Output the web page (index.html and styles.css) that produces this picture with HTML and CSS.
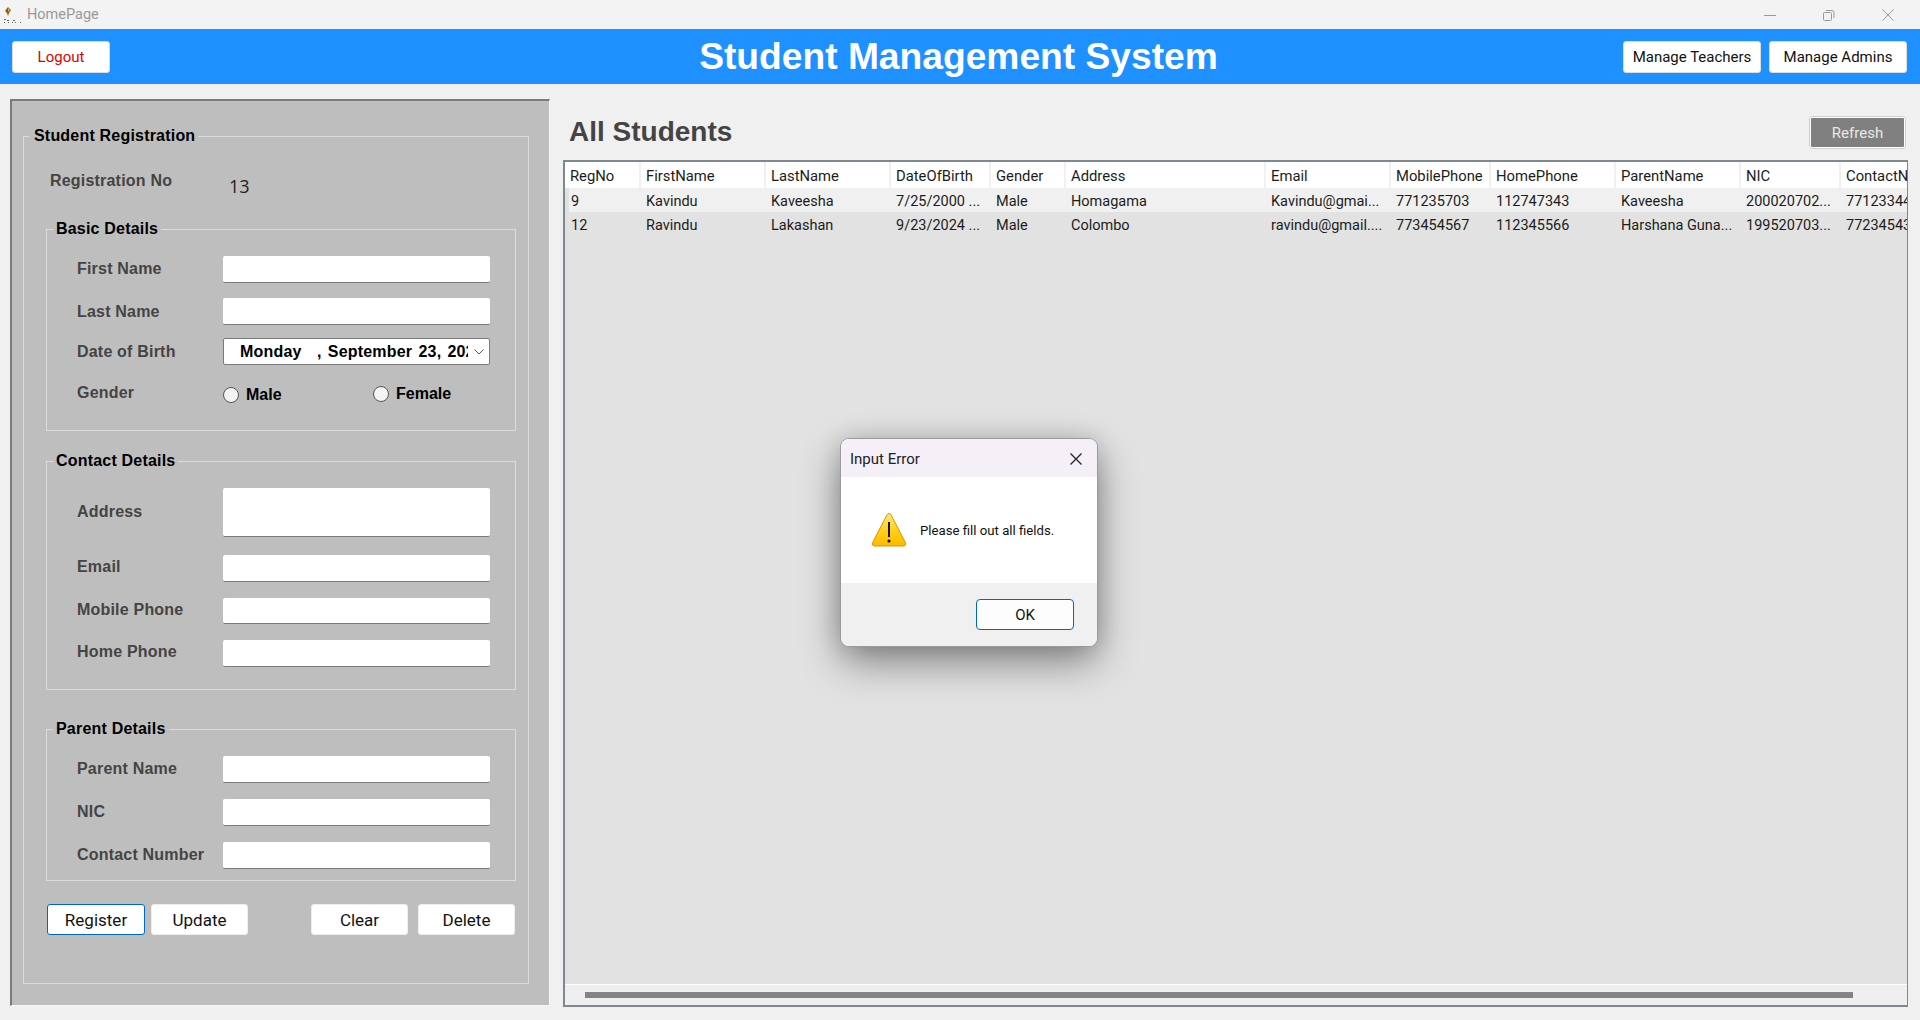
FILE: index.html
```html
<!DOCTYPE html>
<html>
  <head>
    <meta charset="utf-8">
    <title>HomePage</title>
    <link rel="stylesheet" href="styles.css">
  </head>
  <body>
    <div class="titlebar">
      <svg class="app-icon" width="18" height="18" viewBox="0 0 18 18">
        <path d="M5 1l3 3-2 3-1 3-1-3-2-2z" fill="#8a5a1c"/>
        <path d="M5 2l2 2-2 2z" fill="#e0b040"/>
        <path d="M1 13h2v1H1zM4 14h2v1H4zM1 16h1v1H1zM5 16h1v1H5zM10 14h2v1h-2zM9 16h1v1H9zM12 16h1v1h-1zM17 16h1v1h-1z" fill="#666"/>
      </svg>
      <span class="app-name">HomePage</span>
      <div class="win-controls">
        <svg width="12" height="12" viewBox="0 0 12 12"><path d="M0 6.500h12" stroke="#999" fill="none"/></svg>
        <svg width="12" height="12" viewBox="0 0 12 12"><path d="M1.500 3.500h6a1 1 0 0 1 1 1v6a1 1 0 0 1-1 1h-6a1 1 0 0 1-1-1v-6a1 1 0 0 1 1-1zM3 1.500h6a2 2 0 0 1 2 2V9" stroke="#999" fill="none"/></svg>
        <svg width="12" height="12" viewBox="0 0 12 12"><path d="M.5.5l11 11M11.500.5l-11 11" stroke="#999" fill="none"/></svg>
      </div>
    </div>

    <div class="header">
      <div class="header-left"><button class="btn logout">Logout</button></div>
      <div class="app-title">Student Management System</div>
      <div class="header-right">
        <button class="btn manage">Manage Teachers</button>
        <button class="btn manage">Manage Admins</button>
      </div>
    </div>

    <div class="main">
      <div class="left-panel">
        <fieldset class="outer-box">
          <legend class="outer-legend">Student Registration</legend>
          <div class="reg-row">
            <span class="label">Registration No</span>
            <span class="reg-value">13</span>
          </div>

          <fieldset class="group basic">
            <legend>Basic Details</legend>
            <div class="row first-name"><span class="label">First Name</span><input class="txt" type="text"></div>
            <div class="row"><span class="label">Last Name</span><input class="txt" type="text"></div>
            <div class="row">
              <span class="label">Date of Birth</span>
              <div class="date-box">
                <span class="date-text"><span class="date-day">Monday</span>, September 23, 2024</span>
                <svg width="10" height="6" viewBox="0 0 10 6"><path d="M.5.5L5 5 9.500.5" stroke="#555" fill="none"/></svg>
              </div>
            </div>
            <div class="row gender-row">
              <span class="label">Gender</span>
              <div class="radios">
                <label class="radio male"><span class="dot"></span>Male</label>
                <label class="radio female"><span class="dot"></span>Female</label>
              </div>
            </div>
          </fieldset>

          <fieldset class="group contact">
            <legend>Contact Details</legend>
            <div class="row address-row"><span class="label">Address</span><textarea class="txt"></textarea></div>
            <div class="row"><span class="label">Email</span><input class="txt" type="text"></div>
            <div class="row"><span class="label">Mobile Phone</span><input class="txt" type="text"></div>
            <div class="row"><span class="label">Home Phone</span><input class="txt" type="text"></div>
          </fieldset>

          <fieldset class="group parent">
            <legend>Parent Details</legend>
            <div class="row"><span class="label">Parent Name</span><input class="txt" type="text"></div>
            <div class="row"><span class="label">NIC</span><input class="txt" type="text"></div>
            <div class="row"><span class="label">Contact Number</span><input class="txt" type="text"></div>
          </fieldset>

          <div class="form-buttons">
            <button class="btn form-btn focused">Register</button>
            <button class="btn form-btn">Update</button>
            <span class="spacer"></span>
            <button class="btn form-btn clear">Clear</button>
            <button class="btn form-btn">Delete</button>
          </div>
        </fieldset>
      </div>

      <div class="right-panel">
        <div class="list-head">
          <h1>All Students</h1>
          <button class="refresh">Refresh</button>
        </div>
        <div class="grid-box">
          <div class="grid-scroll">
            <table>
              <colgroup>
                <col class="w75"><col class="w125"><col class="w125"><col class="w100"><col class="w75"><col class="w200">
                <col class="w125"><col class="w100"><col class="w125"><col class="w125"><col class="w100"><col class="w125">
              </colgroup>
              <thead>
                <tr>
                  <th>RegNo</th><th>FirstName</th><th>LastName</th><th>DateOfBirth</th><th>Gender</th><th>Address</th>
                  <th>Email</th><th>MobilePhone</th><th>HomePhone</th><th>ParentName</th><th>NIC</th><th>ContactNumber</th>
                </tr>
              </thead>
              <tbody>
                <tr class="odd">
                  <td>9</td><td>Kavindu</td><td>Kaveesha</td><td>7/25/2000 ...</td><td>Male</td><td>Homagama</td>
                  <td>Kavindu@gmai...</td><td>771235703</td><td>112747343</td><td>Kaveesha</td><td>200020702...</td><td>771233445</td>
                </tr>
                <tr>
                  <td>12</td><td>Ravindu</td><td>Lakashan</td><td>9/23/2024 ...</td><td>Male</td><td>Colombo</td>
                  <td>ravindu@gmail....</td><td>773454567</td><td>112345566</td><td>Harshana Guna...</td><td>199520703...</td><td>772345432</td>
                </tr>
              </tbody>
            </table>
          </div>
          <div class="hscroll"><div class="hscroll-thumb"></div></div>
        </div>
      </div>
    </div>

    <div class="dialog">
      <div class="dialog-title">
        <span>Input Error</span>
        <svg width="12" height="12" viewBox="0 0 12 12"><path d="M.5.5l11 11M11.500.5l-11 11" stroke="#222" stroke-width="1.300" fill="none"/></svg>
      </div>
      <div class="dialog-body">
        <svg width="36" height="36" viewBox="0 0 36 36">
          <defs>
            <linearGradient id="warnfill" x1="0" y1="0" x2="0" y2="1">
              <stop offset="0" stop-color="#ffe680"/>
              <stop offset="0.5" stop-color="#ffd21a"/>
              <stop offset="1" stop-color="#fdb900"/>
            </linearGradient>
          </defs>
          <path d="M18 1.500c.8 0 1.500.5 2 1.300l14.500 28c.8 1.600-.1 3.200-1.800 3.200H3.300c-1.700 0-2.600-1.600-1.800-3.200L16 2.800c.5-.8 1.200-1.300 2-1.300z" fill="url(#warnfill)" stroke="#d89300"/>
          <path d="M17 10h2v15h-2z" fill="#111"/>
          <circle cx="18" cy="29" r="1.600" fill="#111"/>
        </svg>
        <span>Please fill out all fields.</span>
      </div>
      <div class="dialog-foot"><button class="ok-btn">OK</button></div>
    </div>
  </body>
</html>
```

FILE: styles.css
```css
*{
  box-sizing: border-box;
}
html,body{
  margin: 0;
  height: 1020px;
  overflow: hidden;
}
body{
  display: flex;
  flex-direction: column;
  background: #f0f0f0;
  font-family: "Liberation Sans", Arial, sans-serif;
}

/* title bar */
.titlebar{
  height: 29px;
  flex: none;
  display: flex;
  align-items: center;
  background: #f3f3f3;
  padding-left: 3px;
}
.app-icon{
  margin-top: 1px;
}
.app-name{
  margin-left: 6px;
  font: 14.5px "Roboto", sans-serif;
  color: #999;
}
.win-controls{
  margin-left: auto;
  display: flex;
  gap: 47px;
  padding-right: 26px;
}

/* blue header */
.header{
  height: 55px;
  flex: none;
  display: grid;
  grid-template-columns: 1fr auto 1fr;
  align-items: center;
  background: #1e90ff;
  padding: 0 13px 0 12px;
}
.app-title{
  font-size: 37.2px;
  font-weight: bold;
  color: #fff;
  margin-left: -2px;
}
.header-right{
  display: flex;
  justify-content: flex-end;
  gap: 8px;
}
.btn{
  background: #fff;
  border: 1px solid #dcdcdc;
  border-radius: 3px;
  font-family: "Roboto", sans-serif;
  color: #111;
  padding: 0;
}
.logout{
  width: 98px;
  height: 32px;
  color: #e00000;
  font-size: 15px;
}
.manage{
  width: 138px;
  height: 32px;
  font-size: 15px;
}

/* main area */
.main{
  flex: 1;
  display: flex;
  padding: 15px 12px 13px 10px;
  gap: 13px;
}
.left-panel{
  width: 540px;
  flex: none;
  margin-bottom: 1px;
  background: #bebebe;
  border-top: 2px solid #7a7a7a;
  border-left: 2px solid #7a7a7a;
  border-right: 1px solid #f8f8f8;
  border-bottom: 1px solid #f8f8f8;
  padding: 26px 0 0 11px;
}
fieldset{
  margin: 0;
  padding: 0;
  min-width: 0;
  border: 1px solid #dcdcdc;
}
legend{
  font-size: 16px;
  font-weight: bold;
  line-height: 18px;
  letter-spacing: .2px;
  color: #000;
  padding: 0 3px;
  margin-left: 6px;
}
.outer-box{
  width: 506px;
  height: 857px;
}
.outer-legend{
  margin-left: 5px;
  padding: 0 3px 0 5px;
}
.label{
  font-size: 16px;
  font-weight: bold;
  letter-spacing: .2px;
  color: #444;
  white-space: nowrap;
}
.reg-row{
  display: flex;
  height: 75px;
  padding: 27px 0 0 26px;
}
.reg-row .label{
  width: 179px;
}
.reg-value{
  font: 18px "Open Sans", sans-serif;
  color: #222;
  margin-top: 2px;
}

.group{
  width: 470px;
  margin-left: 22px;
  padding-left: 30px;
}
.group legend{
  margin-left: -24px;
}
.contact{
  margin-top: 21px;
  height: 238px;
  padding-top: 18px;
}
.parent{
  margin-top: 30px;
  height: 161px;
  padding-top: 18px;
}
.basic{
  height: 211px;
  padding-top: 18px;
}
.row{
  display: grid;
  grid-template-columns: 146px 267px;
  align-items: center;
  height: 27px;
  margin-bottom: 13px;
}
.first-name{
  margin-bottom: 15px;
}
.contact .row{
  height: 26.5px;
  margin-bottom: 16px;
}
.contact .address-row{
  height: 49px;
  margin-bottom: 18px;
}
.parent .row{
  margin-bottom: 16px;
}
.contact .label,
.parent .label,
.first-name .label{
  margin-top: -2px;
}
.txt{
  display: block;
  width: 267px;
  height: 100%;
  margin: 0;
  background: #fff;
  border: 0;
  border-bottom: 1px solid #7a7a7a;
  border-radius: 2px;
  resize: none;
  outline: none;
}
.date-box{
  height: 27px;
  display: flex;
  align-items: center;
  background: #fff;
  border: 1px solid #7a7a7a;
  border-radius: 2px;
  padding-left: 16px;
}
.date-text{
  width: 228px;
  overflow: hidden;
  white-space: nowrap;
  font-size: 16px;
  font-weight: bold;
  letter-spacing: .2px;
  word-spacing: 1.5px;
  color: #000;
}
.date-day{
  display: inline-block;
  width: 77px;
}
.date-box svg{
  margin-left: 6px;
}
.gender-row .label{
  margin-top: 2px;
}
.radios{
  display: flex;
  align-self: start;
}
.radio{
  display: flex;
  align-items: center;
  font-size: 16px;
  font-weight: bold;
  color: #000;
  gap: 7px;
}
.male{
  width: 150px;
  margin-top: 8px;
}
.female{
  margin-top: 6px;
}
.dot{
  width: 16px;
  height: 16px;
  border: 1px solid #555;
  border-radius: 50%;
  background: #f4f4f4;
}
.form-buttons{
  display: flex;
  margin: 23px 0 0 23px;
}
.form-btn{
  width: 97px;
  height: 31px;
  font-size: 17px;
  border-color: #eee;
  margin-right: 6px;
}
.form-btn.clear{
  margin-right: 10px;
}
.focused{
  width: 98px;
  border: 1px solid #0067c0;
}
.spacer{
  width: 57px;
}

/* right side */
.right-panel{
  flex: 1;
  min-width: 0;
  display: flex;
  flex-direction: column;
}
.list-head{
  display: flex;
  justify-content: space-between;
  align-items: center;
  margin-top: 17px;
  height: 33px;
  margin-bottom: 11px;
  padding-left: 6px;
}
h1{
  margin: -2px 0 0;
  font-size: 28px;
  font-weight: bold;
  color: #444;
}
.refresh{
  width: 97px;
  height: 33px;
  margin-right: 2px;
  background: #808080;
  border: 2px solid #fff;
  outline: 1px solid #d0d0d0;
  outline-offset: -1px;
  border-radius: 3px;
  color: #e8e8e8;
  font: 15px "Roboto", sans-serif;
}
.grid-box{
  flex: 1;
  min-height: 0;
  display: flex;
  flex-direction: column;
  background: #e2e2e2;
  border: 1px solid #7f8790;
  border-top-width: 2px;
  border-left-width: 2px;
  border-bottom-width: 2px;
}
.grid-scroll{
  flex: 1;
  overflow: hidden;
}
table{
  table-layout: fixed;
  width: 1400px;
  border-collapse: collapse;
  font: 14.5px "Roboto", sans-serif;
  color: #1c1c1c;
}
.w75{ width: 75px; }
.w100{ width: 100px; }
.w125{ width: 125px; }
.w200{ width: 200px; }
th{
  height: 26px;
  padding: 2px 0 0 5px;
  background: #fff;
  border-right: 2px solid #f0f0f0;
  font-size: 14.8px;
  font-weight: normal;
  text-align: left;
  white-space: nowrap;
  overflow: hidden;
}
td{
  height: 24px;
  padding: 2px 0 0 6px;
  white-space: nowrap;
  overflow: hidden;
}
.odd{
  background: #f0f0f0;
}
.odd td:first-child{
  background: linear-gradient(90deg, #e2e2e2 4px, #f0f0f0 4px);
}
.hscroll{
  flex: none;
  height: 21px;
  background: #efefef;
  border-top: 1px solid #fff;
  padding: 7px 0 0 20px;
}
.hscroll-thumb{
  width: 1268px;
  height: 6px;
  background: #848484;
}

/* message box */
.dialog{
  position: absolute;
  left: 841px;
  top: 439px;
  width: 256px;
  height: 207px;
  display: flex;
  flex-direction: column;
  background: #fff;
  border-radius: 8px;
  overflow: hidden;
  box-shadow: 0 0 0 1px #9a9a9a, 0 16px 40px rgba(0,0,0,.42), 0 0 24px rgba(0,0,0,.15);
  font-family: "Roboto", sans-serif;
}
.dialog-title{
  height: 38px;
  flex: none;
  display: flex;
  align-items: center;
  justify-content: space-between;
  background: #f5eff7;
  padding: 1px 15px 0 9px;
  font-size: 15px;
  color: #222;
}
.dialog-body{
  flex: 1;
  display: flex;
  align-items: center;
  gap: 13px;
  padding-left: 30px;
  font-size: 13.2px;
  color: #111;
}
.dialog-foot{
  height: 63px;
  flex: none;
  display: flex;
  justify-content: flex-end;
  background: #f0f0f0;
  padding: 16px 23px 0 0;
}
.ok-btn{
  width: 98px;
  height: 31px;
  background: #fdfdfd;
  border: 1px solid #0067c0;
  border-radius: 4px;
  font: 15px "Roboto", sans-serif;
  color: #111;
}
```
